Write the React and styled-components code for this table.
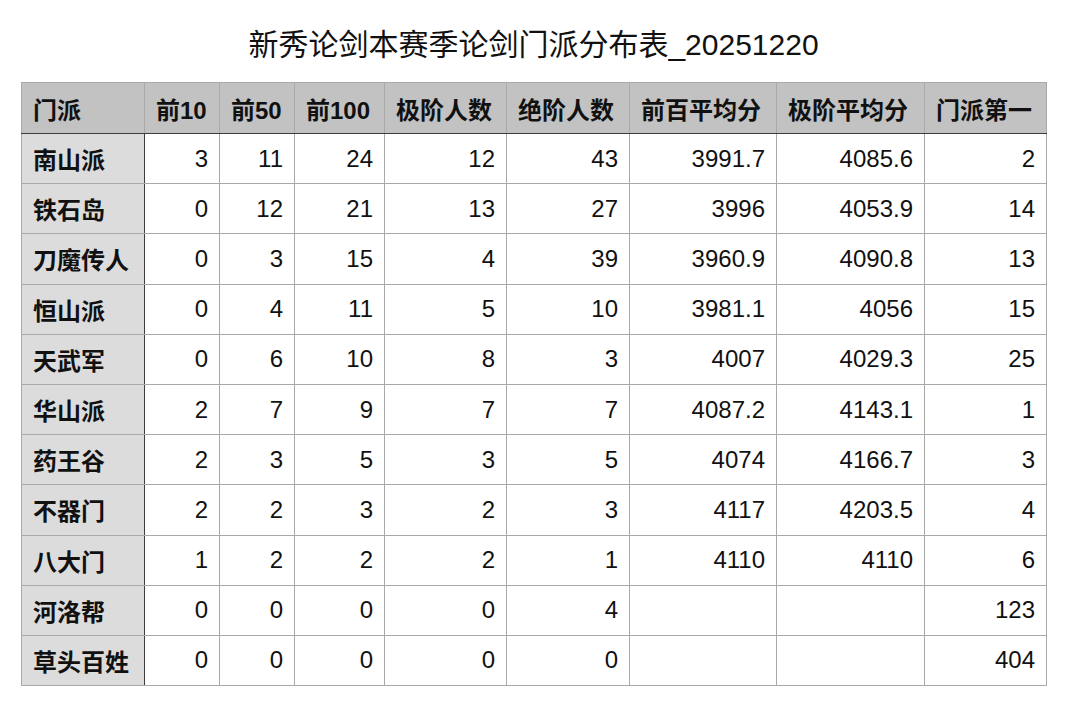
import React from 'react';
import styled, { createGlobalStyle } from 'styled-components';

const GlobalStyle = createGlobalStyle`
  body {
    margin: 0;
    background: #fff;
    font-family: "Liberation Sans", "Noto Sans CJK SC", sans-serif;
    color: #111;
  }
`;

const Page = styled.div`
  width: 1076px;
  padding: 25px 0 0 21px;
  box-sizing: border-box;
`;

const Title = styled.h1`
  width: 1025px;
  margin: 0;
  font-size: 30px;
  line-height: 40px;
  font-weight: 400;
  text-align: center;
  color: #111;
`;

const Table = styled.table`
  margin-top: 17px;
  border-collapse: collapse;
  table-layout: fixed;
  width: 1025px;
  font-size: 24px;
`;

const HeadCell = styled.th`
  height: 50px;
  padding: 0 11px;
  background: #c1c2c1;
  border: 1px solid #a9a9a9;
  border-bottom: 1px solid #3c3c3c;
  text-align: left;
  font-weight: 700;
  white-space: nowrap;
`;

const NameCell = styled.td`
  height: 49.2px;
  padding: 0 11px;
  background: #dcdcdc;
  border: 1px solid #a9a9a9;
  border-right: 1px solid #3c3c3c;
  font-weight: 700;
  white-space: nowrap;
`;

const NumCell = styled.td`
  padding: 0 11px;
  border: 1px solid #a9a9a9;
  text-align: right;
  white-space: nowrap;
`;

const columns = [
  { label: '门派', width: 123 },
  { label: '前10', width: 75 },
  { label: '前50', width: 75 },
  { label: '前100', width: 90 },
  { label: '极阶人数', width: 122 },
  { label: '绝阶人数', width: 123 },
  { label: '前百平均分', width: 147 },
  { label: '极阶平均分', width: 148 },
  { label: '门派第一', width: 122 },
];

const rows = [
  ['南山派', 3, 11, 24, 12, 43, '3991.7', '4085.6', 2],
  ['铁石岛', 0, 12, 21, 13, 27, '3996', '4053.9', 14],
  ['刀魔传人', 0, 3, 15, 4, 39, '3960.9', '4090.8', 13],
  ['恒山派', 0, 4, 11, 5, 10, '3981.1', '4056', 15],
  ['天武军', 0, 6, 10, 8, 3, '4007', '4029.3', 25],
  ['华山派', 2, 7, 9, 7, 7, '4087.2', '4143.1', 1],
  ['药王谷', 2, 3, 5, 3, 5, '4074', '4166.7', 3],
  ['不器门', 2, 2, 3, 2, 3, '4117', '4203.5', 4],
  ['八大门', 1, 2, 2, 2, 1, '4110', '4110', 6],
  ['河洛帮', 0, 0, 0, 0, 4, '', '', 123],
  ['草头百姓', 0, 0, 0, 0, 0, '', '', 404],
];

const App = () => {
  return (
    <Page>
      <GlobalStyle />
      <Title>新秀论剑本赛季论剑门派分布表_20251220</Title>
      <Table>
        <colgroup>
          {columns.map((c) => (
            <col key={c.label} style={{ width: c.width }} />
          ))}
        </colgroup>
        <thead>
          <tr>
            {columns.map((c) => (
              <HeadCell key={c.label}>{c.label}</HeadCell>
            ))}
          </tr>
        </thead>
        <tbody>
          {rows.map(([name, ...values]) => (
            <tr key={name}>
              <NameCell>{name}</NameCell>
              {values.map((v, i) => (
                <NumCell key={i}>{v}</NumCell>
              ))}
            </tr>
          ))}
        </tbody>
      </Table>
    </Page>
  );
};

export default App;
